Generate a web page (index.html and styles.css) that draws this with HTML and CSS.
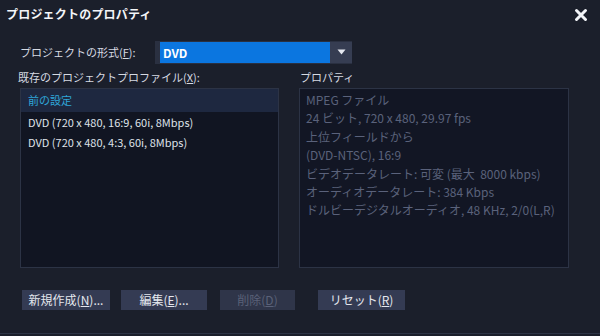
FILE: index.html
```html
<!DOCTYPE html>
<html lang="ja">

<head>
    <meta charset="UTF-8">
    <meta name="viewport" content="width=device-width, initial-scale=1.0">
    <title>プロジェクトのプロパティ</title>
    <link rel="stylesheet" href="styles.css">
</head>

<body>

    <div class="dialog">
        <div class="title-bar">
            <span class="title">プロジェクトのプロパティ</span>
            <span class="close-btn">
                <svg width="14" height="14" viewBox="0 0 14 14">
                    <path d="M2.5 2.5 L11.5 11.5 M11.5 2.5 L2.5 11.5" stroke="#f2f4f8" stroke-width="3" stroke-linecap="round" />
                </svg>
            </span>
        </div>

        <div class="format-row">
            <span class="label">プロジェクトの形式(<u>F</u>):</span>
            <div class="select">
                <div class="select-value">DVD</div>
                <div class="select-arrow">
                    <svg width="9" height="6" viewBox="0 0 9 6">
                        <path d="M0.5 0.5 L8.5 0.5 L4.5 5.5 Z" fill="#e6e9f0" />
                    </svg>
                </div>
            </div>
        </div>

        <div class="columns">
            <div class="column left-col">
                <div class="col-label">既存のプロジェクトプロファイル(<u>X</u>):</div>
                <div class="list-box">
                    <div class="list-item selected">前の設定</div>
                    <div class="list-item">DVD (720 x 480, 16:9, 60i, 8Mbps)</div>
                    <div class="list-item">DVD (720 x 480, 4:3, 60i, 8Mbps)</div>
                </div>
            </div>
            <div class="column right-col">
                <div class="col-label">プロパティ</div>
                <div class="props-box">
                    <div>MPEG ファイル</div>
                    <div>24 ビット, 720 x 480, 29.97 fps</div>
                    <div>上位フィールドから</div>
                    <div>(DVD-NTSC), 16:9</div>
                    <div>ビデオデータレート: 可変 (最大&nbsp; 8000 kbps)</div>
                    <div>オーディオデータレート: 384 Kbps</div>
                    <div>ドルビーデジタルオーディオ, 48 KHz, 2/0(L,R)</div>
                </div>
            </div>
        </div>

        <div class="button-row">
            <button class="btn btn-new">新規作成(<u>N</u>)...</button>
            <button class="btn btn-edit">編集(<u>E</u>)...</button>
            <button class="btn btn-delete" disabled>削除(<u>D</u>)</button>
            <button class="btn btn-reset">リセット(<u>R</u>)</button>
        </div>

        <div class="bottom-line"></div>
    </div>

</body>

</html>
```

FILE: styles.css
```css
body {
    margin: 0;
    padding: 0;
    background-color: #1b1f2b;
    font-family: 'Noto Sans CJK JP', 'Noto Sans', sans-serif;
    color: #e4e7ee;
    width: 600px;
    height: 336px;
    overflow: hidden;
}

u {
    text-decoration: underline;
    text-underline-offset: 1px;
}

.dialog {
    display: flex;
    flex-direction: column;
    height: 336px;
}

.title-bar {
    display: flex;
    align-items: center;
    justify-content: space-between;
    height: 27px;
    padding: 0 12px 0 6px;
}

.title {
    font-size: 12px;
    font-weight: bold;
    color: #f4f5f8;
    letter-spacing: 0.2px;
}

.close-btn {
    display: flex;
    margin-top: 2px;
}

.format-row {
    display: flex;
    align-items: center;
    margin-top: 13px;
    padding-left: 20px;
    height: 24px;
}

.label {
    font-size: 11px;
    color: #d6dae2;
    width: 135px;
}

.select {
    display: flex;
    height: 23px;
    background-color: #2a3041;
    padding: 1px 0 1px 5px;
    box-sizing: border-box;
}

.select-value {
    width: 170px;
    background-color: #0b76e0;
    color: #ffffff;
    font-size: 12px;
    font-weight: bold;
    line-height: 21px;
    padding-left: 3px;
    box-sizing: border-box;
}

.select-arrow {
    width: 22px;
    display: flex;
    align-items: center;
    justify-content: center;
    background-color: #363d52;
}

.columns {
    display: flex;
    gap: 20px;
    padding-left: 20px;
    margin-top: 3px;
}

.column {
    display: flex;
    flex-direction: column;
}

.left-col {
    width: 259px;
}

.right-col {
    width: 270px;
}

.col-label {
    font-size: 11px;
    color: #d6dae2;
    height: 21px;
    line-height: 20px;
    margin-left: -2px;
}

.right-col .col-label {
    margin-left: 1px;
}

.list-box {
    height: 180px;
    background-color: #111522;
    border: 1px solid #2c3345;
    box-sizing: border-box;
}

.list-item {
    font-size: 11px;
    color: #dfe2e9;
    height: 20px;
    line-height: 20px;
    padding-left: 7px;
}

.list-item.selected {
    background-color: #1e2840;
    color: #2fa6d9;
    height: 23px;
    line-height: 22px;
}

.props-box {
    height: 180px;
    background-color: #121624;
    border: 1px solid #2c3345;
    box-sizing: border-box;
    padding: 2px 0 0 6px;
    font-size: 12px;
    line-height: 18.4px;
    color: #5a627b;
}

.button-row {
    display: flex;
    gap: 11px;
    padding-left: 22px;
    margin-top: 22px;
}

.btn {
    height: 20px;
    border: none;
    background-color: #343b53;
    color: #e4e7ee;
    font-family: 'Noto Sans CJK JP', 'Noto Sans', sans-serif;
    font-size: 12px;
    padding: 0;
    line-height: 20px;
}

.btn-new {
    width: 88px;
}

.btn-edit {
    width: 86px;
}

.btn-delete {
    width: 75px;
    margin-left: 2px;
    color: #5a6178;
    background-color: #2f3549;
}

.btn-reset {
    width: 87px;
    margin-left: 12px;
}

.bottom-line {
    margin-top: auto;
    margin-bottom: 2px;
    height: 1px;
    background-color: #2d3445;
}
```
